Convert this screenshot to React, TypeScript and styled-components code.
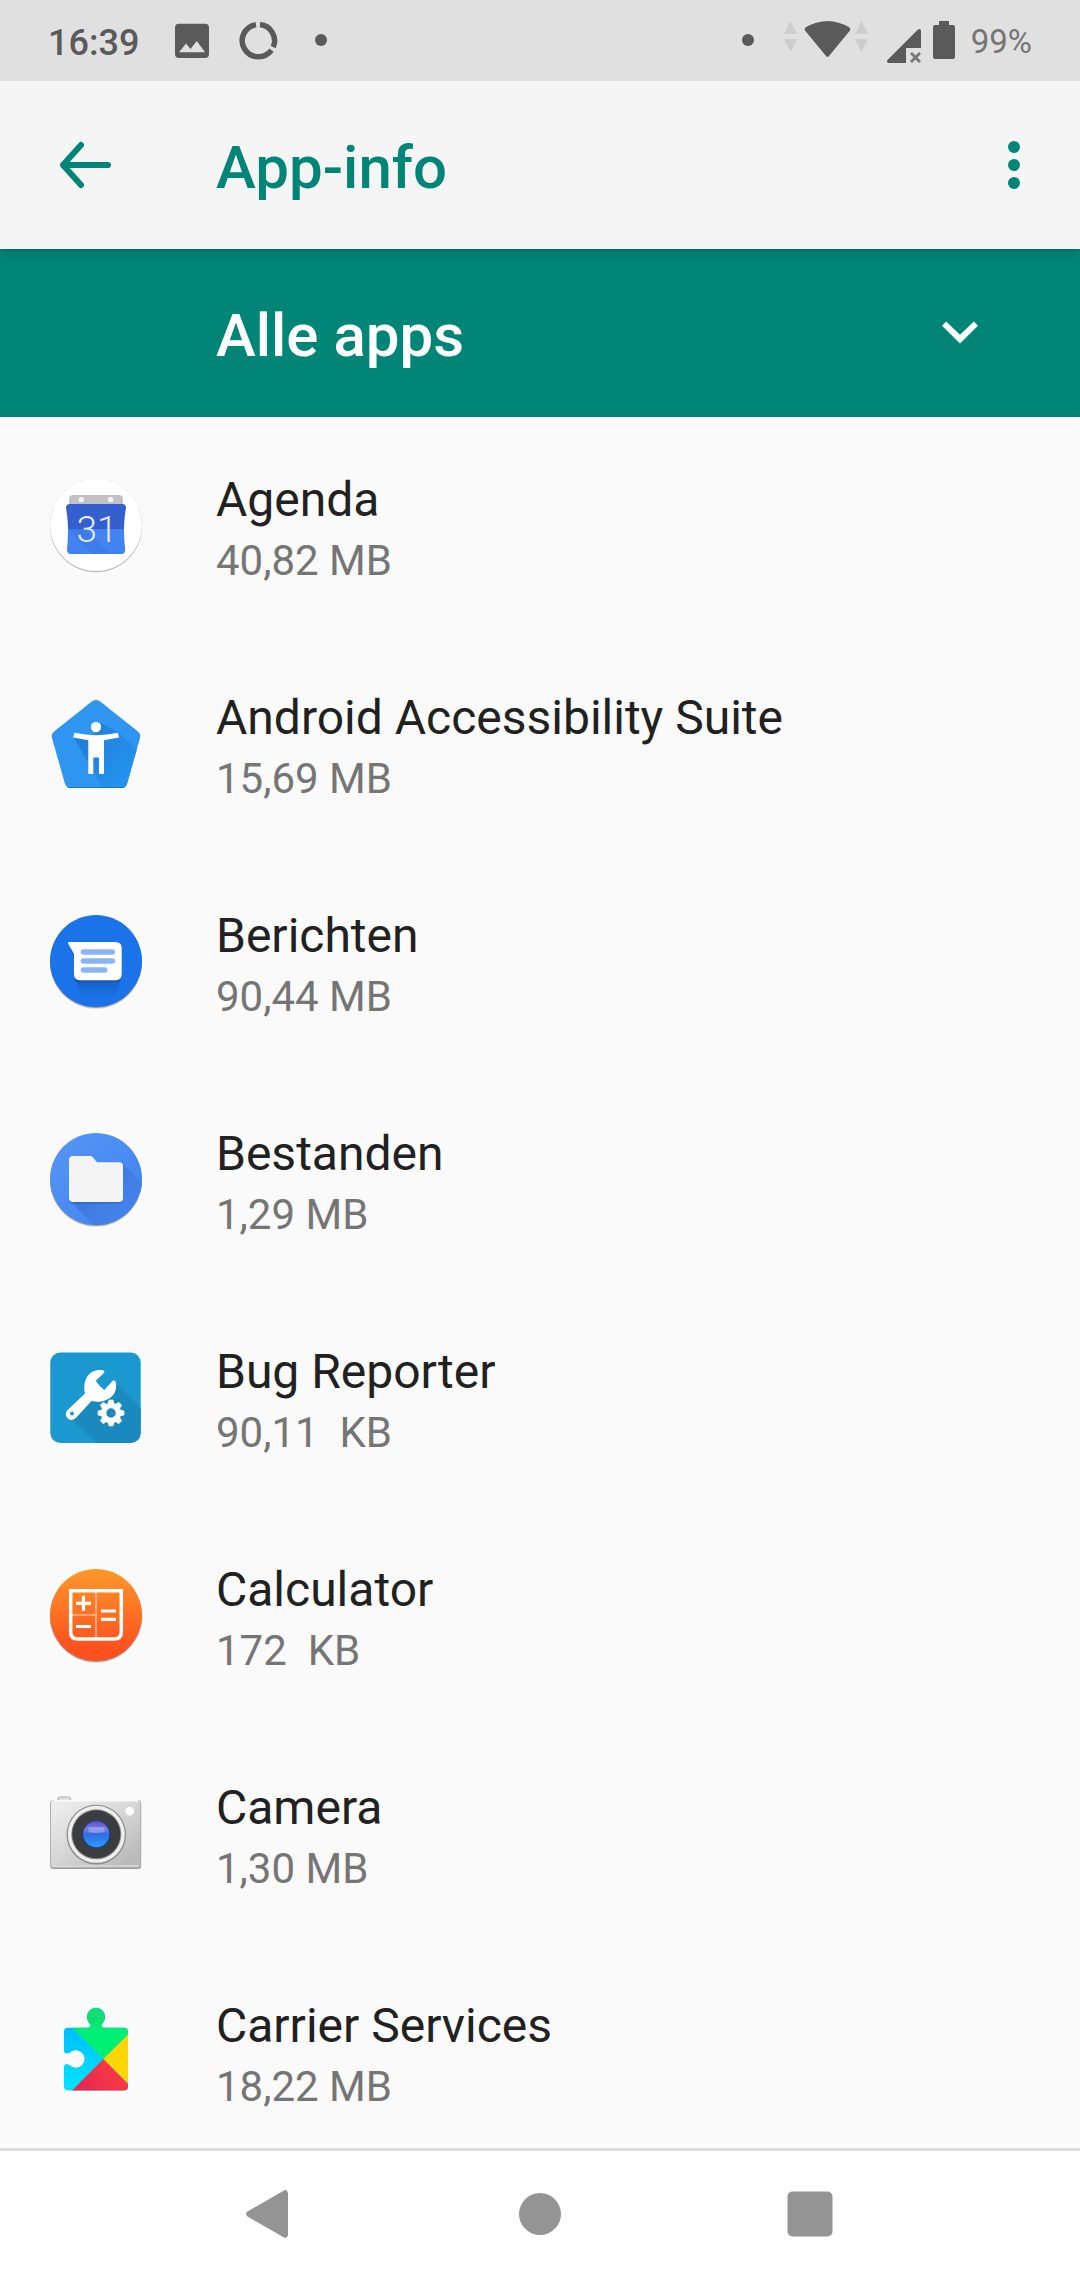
import React, { ReactNode } from "react";
import styled, { createGlobalStyle } from "styled-components";

const GlobalStyle = createGlobalStyle`
  *, *::before, *::after { box-sizing: border-box; }
  body {
    margin: 0;
    font-family: Roboto, "Noto Sans", sans-serif;
    background: #fafafa;
    color: #212121;
  }
  button, select {
    margin: 0;
    padding: 0;
    border: 0;
    background: none;
    font: inherit;
    color: inherit;
    cursor: pointer;
  }
  svg { display: block; flex: none; }
`;

const Screen = styled.div`
  display: flex;
  flex-direction: column;
  height: 100vh;
`;

const StatusBar = styled.div`
  flex: none;
  position: relative;
  z-index: 2;
  display: flex;
  justify-content: space-between;
  height: 81px;
  padding: 0 48px;
  background: #e0e0e0;
  color: #5a5a5a;
`;

const StatusGroup = styled.div<{ $gap?: number }>`
  display: flex;
  align-items: center;
  gap: ${(p) => p.$gap ?? 0}px;
`;

const Clock = styled.time`
  padding: 4px 20px 0 0;
  font-size: 36px;
  font-weight: 500;
`;

const BatteryLevel = styled.span`
  padding: 2px 0 0 2px;
  font-size: 33px;
  color: #757575;
`;

const AppBar = styled.header`
  flex: none;
  position: relative;
  z-index: 1;
  display: flex;
  align-items: center;
  height: 168px;
  padding: 0 30px 0 48px;
  background: #f5f5f5;
  color: #008577;
  box-shadow: 0 2px 8px rgba(0, 0, 0, 0.22);
`;

const IconButton = styled.button`
  flex: none;
  width: 72px;
  height: 72px;
`;

const Title = styled.h1`
  flex: 1;
  margin: 0;
  padding: 4px 0 0 96px;
  font-size: 60px;
  font-weight: 500;
`;

const FilterBar = styled.label`
  flex: none;
  display: grid;
  align-items: center;
  height: 168px;
  background: #008577;
  color: #ffffff;

  & > * { grid-area: 1 / 1; }
  & > svg {
    justify-self: end;
    margin-right: 84px;
    pointer-events: none;
  }
`;

const FilterSelect = styled.select`
  appearance: none;
  width: 100%;
  height: 100%;
  padding: 4px 216px 0;
  font-size: 60px;
  font-weight: 500;
  outline: none;
`;

const AppList = styled.ul`
  flex: 1;
  min-height: 0;
  margin: 0;
  padding: 0;
  list-style: none;
  overflow-y: auto;
  scrollbar-width: none;
`;

const AppRow = styled.button`
  display: flex;
  align-items: center;
  gap: 72px;
  width: 100%;
  height: 218px;
  padding: 0 48px;
  text-align: left;
`;

const AppText = styled.span`
  display: flex;
  flex-direction: column;
  min-width: 0;
`;

const AppName = styled.span`
  font-size: 48px;
  line-height: 70px;
`;

const AppSize = styled.span`
  font-size: 42px;
  line-height: 52px;
  color: #757575;
  white-space: pre;
`;

const NavBar = styled.nav`
  flex: none;
  display: grid;
  grid-template-columns: repeat(3, 25%);
  justify-content: center;
  height: 132px;
  background: #ffffff;
  box-shadow: inset 0 3px #dcdcdc;
`;

const NavButton = styled.button`
  display: flex;
  align-items: center;
  justify-content: center;
`;

const DropShadow = () => (
  <>
    <circle cx="48" cy="49" r="46" fill="#000" opacity=".1" />
    <circle cx="48" cy="48" r="46" fill="#000" opacity=".3" />
  </>
);

const AppIcon = ({ children }: { children: ReactNode }) => (
  <svg width="96" height="96" viewBox="0 0 96 96" aria-hidden="true">
    {children}
  </svg>
);

const CalendarIcon = () => (
  <AppIcon>
    <circle cx="48" cy="47.3" r="46.6" fill="#000" opacity=".07" />
    <circle cx="48" cy="48.2" r="46" fill="#000" opacity=".22" />
    <circle cx="48" cy="47" r="46" fill="#fff" />
    <path d="M21 30V21q0-4 4-4h46q4 0 4 4v9z" fill="#c2c2c2" />
    <circle cx="33.3" cy="21.6" r="2.7" fill="#f3f3f3" />
    <circle cx="62.6" cy="21.6" r="2.7" fill="#f3f3f3" />
    <path d="M20 51Q20 42 18 30q0-4 4-4h52q4 0 4 4Q76 42 76 51z" fill="#3360cd" />
    <path d="M20 51h56q0 11 1.2 21q0 4-4 4H23q-4 0-4-4Q20 62 20 51z" fill="#4283f3" />
    <path d="M20 51L45 76H62L37 51z" fill="#3c78e4" opacity=".6" />
    <text x="49" y="64" textAnchor="middle" fontFamily="Roboto, sans-serif" fontSize="37" fontWeight="300" fill="#e6e9f2">
      31
    </text>
  </AppIcon>
);

const AccessibilityIcon = () => (
  <AppIcon>
    <defs>
      <linearGradient id="a11yShade" x1="30" y1="30" x2="80" y2="75" gradientUnits="userSpaceOnUse">
        <stop offset="0" stopColor="#2079d5" />
        <stop offset="1" stopColor="#2392ee" />
      </linearGradient>
      <clipPath id="a11yShape">
        <path d="M44.5 5Q48 3 51.5 5L90 35.5Q93 38 92 42L79 88Q77.5 92 73.5 92H22.5Q18.5 92 17 88L4 42Q3 38 6 35.5z" />
      </clipPath>
    </defs>
    <g clipPath="url(#a11yShape)">
      <path d="M0 0H96V96H0z" fill="#2e96f1" />
      <path d="M53 27L71 37L97 61V96H57L26 42L44 43z" fill="url(#a11yShade)" />
      <path d="M16 91H80V93H16z" fill="#1c78c8" />
    </g>
    <circle cx="48" cy="31" r="5.2" fill="#fff" />
    <path d="M26.5 36.8Q48 41.5 69.8 36.8L71.2 41.5L56 44.3V78H51V61.5H45.3V78H40.3V44.3L25.2 41.5z" fill="#fff" />
  </AppIcon>
);

const MessagesIcon = () => (
  <AppIcon>
    <defs>
      <linearGradient id="msgShade" x1="0" y1="64" x2="0" y2="84" gradientUnits="userSpaceOnUse">
        <stop offset="0" stopColor="#174ea6" stopOpacity=".6" />
        <stop offset="1" stopColor="#174ea6" stopOpacity="0" />
      </linearGradient>
    </defs>
    <DropShadow />
    <circle cx="48" cy="47" r="46" fill="#1a73e8" />
    <path d="M27 64H73L67 84H33z" fill="url(#msgShade)" />
    <path d="M20 29L26 43V63q0 6 6 6H67.5q6 0 6-6V60H26V39z" fill="#185abc" />
    <path d="M21 28H67.5q6.2 0 6.2 6.2V60q0 6.2-6.2 6.2H32.2Q26 66.2 26 60V40L20 29.5Q19.5 28 21 28z" fill="#fff" />
    <g stroke="#8ab4f8" strokeWidth="5.6" strokeLinecap="round">
      <path d="M35.5 38H64.3M35.5 47H64.3M35.5 56H56.7" />
    </g>
  </AppIcon>
);

const FilesIcon = () => (
  <AppIcon>
    <defs>
      <linearGradient id="filesBg" x1="15" y1="15" x2="80" y2="80" gradientUnits="userSpaceOnUse">
        <stop offset="0" stopColor="#5493f4" />
        <stop offset="1" stopColor="#4285f2" />
      </linearGradient>
      <linearGradient id="filesShade" x1="40" y1="50" x2="72" y2="80" gradientUnits="userSpaceOnUse">
        <stop offset="0" stopColor="#3d75d9" />
        <stop offset="1" stopColor="#4382ec" />
      </linearGradient>
      <clipPath id="filesDisc">
        <circle cx="48" cy="47" r="46" />
      </clipPath>
    </defs>
    <DropShadow />
    <g clipPath="url(#filesDisc)">
      <path d="M0 0H96V96H0z" fill="url(#filesBg)" />
      <path d="M74 31L96 53V96H48L22 69z" fill="url(#filesShade)" />
    </g>
    <path d="M25 25H42.5q2 0 3 1.5L49 31.5H71q4 0 4 4V67.5q0 4-4 4H25q-4 0-4-4V29q0-4 4-4z" fill="#2d5cb5" opacity=".55" />
    <path d="M25 24H42.5q1.5 0 2.5 1.5L49 30.3H71q4 0 4 4V66q0 4-4 4H25q-4 0-4-4V28q0-4 4-4z" fill="#f4f4f4" />
  </AppIcon>
);

const BugReporterIcon = () => (
  <AppIcon>
    <defs>
      <clipPath id="bugTile">
        <rect x="2.3" y="2.5" width="90.4" height="90.5" rx="10" />
      </clipPath>
    </defs>
    <g clipPath="url(#bugTile)">
      <path d="M0 0H96V96H0z" fill="#1b98d0" />
      <path d="M67 32L96 61V96H52L22 67L45 49z" fill="#1989be" />
    </g>
    <path
      d="M55 20.2C42 18 34 29 37 43.5L20.5 59.2A5.8 5.8 0 1 0 28.5 67.2L43.5 51C57 54.5 71 46 67.7 32Q66 29.5 64 31.5L56.3 40Q51 36 47.7 30.7L55.5 23.5Q57.5 21 55 20.2z"
      fill="#fff"
    />
    <circle cx="24" cy="63.5" r="2" fill="#1b98d0" />
    <circle cx="63" cy="63" r="13" fill="#1989be" opacity=".9" />
    <circle cx="63" cy="63" r="7.5" fill="none" stroke="#fff" strokeWidth="5.5" />
    {[0, 45, 90, 135, 180, 225, 270, 315].map((angle) => (
      <path key={angle} d="M60.2 54.5L61 50.2h4L65.8 54.5z" fill="#fff" stroke="#fff" transform={`rotate(${angle} 63 63)`} />
    ))}
  </AppIcon>
);

const CalculatorIcon = () => (
  <AppIcon>
    <defs>
      <linearGradient id="calcBg" x1="0" y1="1" x2="0" y2="93" gradientUnits="userSpaceOnUse">
        <stop offset="0" stopColor="#ff9829" />
        <stop offset=".85" stopColor="#ff521e" />
        <stop offset="1" stopColor="#ff4f1d" />
      </linearGradient>
    </defs>
    <DropShadow />
    <circle cx="48" cy="47" r="46" fill="url(#calcBg)" />
    <path d="M48 24V70M24 47H48" stroke="#fff" strokeWidth="2" opacity=".4" />
    <path d="M22.7 22.7H73.3V64q0 7-7 7H29.7q-7 0-7-7z" fill="none" stroke="#fff" strokeWidth="3.5" />
    <path d="M28 35.3H43M35.5 27.8V42.8M28 58.5H43M53 43H68M53 51.3H68" stroke="#fff" strokeWidth="3.2" />
  </AppIcon>
);

const CameraIcon = () => (
  <AppIcon>
    <defs>
      <linearGradient id="camBody" x1="20" y1="14" x2="70" y2="84" gradientUnits="userSpaceOnUse">
        <stop offset="0" stopColor="#ececec" />
        <stop offset=".5" stopColor="#d5d5d5" />
        <stop offset="1" stopColor="#bababa" />
      </linearGradient>
      <linearGradient id="camLens" x1="0" y1="35" x2="0" y2="62" gradientUnits="userSpaceOnUse">
        <stop offset="0" stopColor="#5c4fc4" />
        <stop offset=".3" stopColor="#7a79e6" />
        <stop offset=".5" stopColor="#2f6fe0" />
        <stop offset="1" stopColor="#2f9cff" />
      </linearGradient>
    </defs>
    <rect x="10" y="11" width="12.5" height="6" rx="2" fill="#e2e2e2" stroke="#a9a9a9" />
    <rect x="2.2" y="14" width="91" height="69" rx="3.5" fill="#9d9d9d" />
    <rect x="3" y="14" width="89.5" height="67.5" rx="3" fill="url(#camBody)" />
    <path d="M6 14.8H90" stroke="#fafafa" strokeWidth="1.5" />
    <path d="M4 80H91" stroke="#d9d9d9" strokeWidth="1.5" />
    <circle cx="48.3" cy="48.6" r="29.8" fill="#8c8c8c" />
    <circle cx="48.3" cy="48.3" r="28.5" fill="#eeeeee" />
    <circle cx="48.3" cy="48.3" r="25" fill="#858585" />
    <circle cx="48.3" cy="48.3" r="24" fill="#3b3c3e" />
    <circle cx="48.3" cy="48.3" r="14" fill="#1c3f90" />
    <circle cx="48.3" cy="48.3" r="13" fill="url(#camLens)" />
    <path d="M40.5 41H56.5V46Q48.5 48 40.5 46z" fill="#b9b8ff" opacity=".5" />
    <circle cx="81.7" cy="25.2" r="4.8" fill="#fff" stroke="#c8c8c8" strokeWidth=".6" />
  </AppIcon>
);

const CarrierIcon = () => (
  <AppIcon>
    <defs>
      <linearGradient id="pieceBlue" x1="0" y1="24" x2="0" y2="86" gradientUnits="userSpaceOnUse">
        <stop offset="0" stopColor="#00beff" />
        <stop offset="1" stopColor="#00e4ff" />
      </linearGradient>
      <linearGradient id="pieceGreen" x1="0" y1="14" x2="0" y2="28" gradientUnits="userSpaceOnUse">
        <stop offset="0" stopColor="#10de70" />
        <stop offset="1" stopColor="#00f076" />
      </linearGradient>
      <linearGradient id="pieceRed" x1="70" y1="60" x2="35" y2="86" gradientUnits="userSpaceOnUse">
        <stop offset="0" stopColor="#ff3a44" />
        <stop offset="1" stopColor="#e42a51" />
      </linearGradient>
      <clipPath id="piece">
        <path d="M20 23.7H39Q42.5 23.7 42.5 20.5Q39 17.5 39 12.7A9 9 0 0 1 57 12.7Q57 17.5 53.5 20.5Q53.5 23.7 57 23.7H76Q80 23.7 80 27.7V82.5Q80 86.5 76 86.5H20Q16 86.5 16 82.5V63Q16 60 19 60L21.5 61A8.7 8.7 0 1 0 21.5 49L19 49.6Q16 49.6 16 46.6V27.7Q16 23.7 20 23.7z" />
      </clipPath>
    </defs>
    <g clipPath="url(#piece)">
      <path d="M0 0H96V96H0z" fill="url(#pieceBlue)" />
      <path d="M0-1L55.3 55L112-1z" fill="url(#pieceGreen)" />
      <path d="M55.3 55L96 14.7V95.3z" fill="#ffd500" />
      <path d="M55.3 55L14.6 96H96z" fill="url(#pieceRed)" />
    </g>
  </AppIcon>
);

const apps = [
  { name: "Agenda", size: "40,82 MB", Icon: CalendarIcon },
  { name: "Android Accessibility Suite", size: "15,69 MB", Icon: AccessibilityIcon },
  { name: "Berichten", size: "90,44 MB", Icon: MessagesIcon },
  { name: "Bestanden", size: "1,29 MB", Icon: FilesIcon },
  { name: "Bug Reporter", size: "90,11  KB", Icon: BugReporterIcon },
  { name: "Calculator", size: "172  KB", Icon: CalculatorIcon },
  { name: "Camera", size: "1,30 MB", Icon: CameraIcon },
  { name: "Carrier Services", size: "18,22 MB", Icon: CarrierIcon },
];

const StatusIcons = () => (
  <StatusBar>
    <StatusGroup>
      <Clock>16:39</Clock>
      <svg width="66" height="81" viewBox="0 0 66 81" fill="#5a5a5a" aria-hidden="true">
        <path
          fillRule="evenodd"
          d="M20 23.7H46q4 0 4 4V54q0 4-4 4H20q-4 0-4-4V27.7q0-4 4-4zM20 52.2H46L37.8 41L31.5 49L27 43.5z"
        />
      </svg>
      <svg width="66" height="81" viewBox="0 0 66 81" fill="none" stroke="#5a5a5a" strokeWidth="5.5" aria-hidden="true">
        <path d="M31 24.6A16.2 16.2 0 1 0 46.5 50.2M48.2 47.2A16.2 16.2 0 0 0 35 24.6" />
      </svg>
      <svg width="66" height="81" viewBox="0 0 66 81" fill="#5a5a5a" aria-hidden="true">
        <circle cx="30" cy="40" r="6" />
      </svg>
    </StatusGroup>
    <StatusGroup $gap={12}>
      <svg width="30" height="81" viewBox="0 0 30 81" fill="#5a5a5a" aria-hidden="true">
        <circle cx="7" cy="40" r="6" />
      </svg>
      <svg width="90" height="81" viewBox="0 0 90 81" aria-hidden="true">
        <path d="M1 34L7.5 21L14 34zM1 39H14L7.5 52zM72 34L78.5 21L85 34zM72 39H85L78.5 52z" fill="#cdcdcd" />
        <path d="M22.5 27.5Q44.5 14.5 66.5 27.5Q68 28.8 67 30.5L46 56q-1.5 1.7-3 0L22 30.5Q21 28.8 22.5 27.5z" fill="#5a5a5a" />
      </svg>
      <svg width="36" height="81" viewBox="0 0 36 81" aria-hidden="true">
        <path d="M36 30.5V48H21V63H3.5Q1 62 2.5 60L33 29.5Q35.5 28 36 30.5z" fill="#5a5a5a" />
        <path d="M26 53L35 62M35 53L26 62" stroke="#757575" strokeWidth="2.8" />
      </svg>
      <svg width="24" height="81" viewBox="0 0 24 81" fill="#5a5a5a" aria-hidden="true">
        <path d="M6 21H16V25H20q2 0 2 2V57q0 2-2 2H2q-2 0-2-2V27q0-2 2-2H6z" />
      </svg>
      <BatteryLevel>99%</BatteryLevel>
    </StatusGroup>
  </StatusBar>
);

export default function App() {
  return (
    <Screen>
      <GlobalStyle />
      <StatusIcons />
      <AppBar>
        <IconButton type="button" aria-label="Terug">
          <svg width="72" height="72" viewBox="0 0 72 72" fill="none" stroke="#008577" strokeWidth="6" strokeLinecap="round" strokeLinejoin="round">
            <path d="M60 36H15M33 16L15 36L33 56" />
          </svg>
        </IconButton>
        <Title>App-info</Title>
        <IconButton type="button" aria-label="Meer opties">
          <svg width="72" height="72" viewBox="0 0 72 72" fill="#008577">
            <circle cx="36" cy="18" r="6" />
            <circle cx="36" cy="36" r="6" />
            <circle cx="36" cy="54" r="6" />
          </svg>
        </IconButton>
      </AppBar>
      <FilterBar>
        <FilterSelect aria-label="Filter" defaultValue="all">
          <option value="all">Alle apps</option>
        </FilterSelect>
        <svg width="72" height="72" viewBox="0 0 24 24" fill="#fff" aria-hidden="true">
          <path d="M7.4 8.2L12 12.6l4.6-4.4L18 9.6l-6 5.9-6-5.9z" />
        </svg>
      </FilterBar>
      <AppList>
        {apps.map(({ name, size, Icon }) => (
          <li key={name}>
            <AppRow type="button">
              <Icon />
              <AppText>
                <AppName>{name}</AppName>
                <AppSize>{size}</AppSize>
              </AppText>
            </AppRow>
          </li>
        ))}
      </AppList>
      <NavBar>
        <NavButton type="button" aria-label="Vorige">
          <svg width="72" height="72" viewBox="0 0 72 72" fill="#949494">
            <path d="M54 15V57q-1 4-4 2.5L13.5 38.5q-3-2.5 0-5L50 12.5Q53 11 54 15z" />
          </svg>
        </NavButton>
        <NavButton type="button" aria-label="Startscherm">
          <svg width="72" height="72" viewBox="0 0 72 72" fill="#949494">
            <circle cx="36" cy="36" r="21" />
          </svg>
        </NavButton>
        <NavButton type="button" aria-label="Recente apps">
          <svg width="72" height="72" viewBox="0 0 72 72" fill="#949494">
            <rect x="13.5" y="13.5" width="45" height="45" rx="5" />
          </svg>
        </NavButton>
      </NavBar>
    </Screen>
  );
}
